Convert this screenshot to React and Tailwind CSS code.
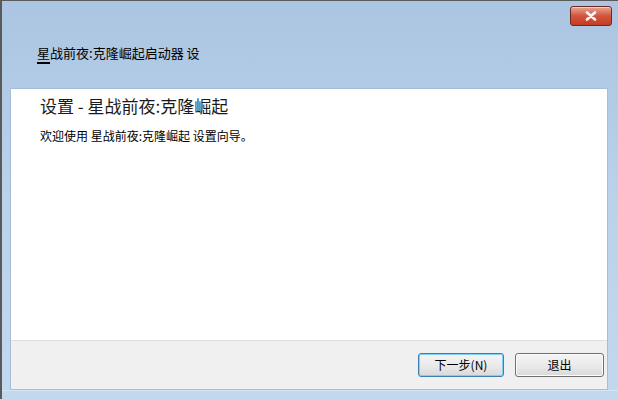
import React from 'react';

const font = { fontFamily: '"Noto Sans CJK SC", "Noto Sans", sans-serif' };

const CloseButton = () => (
  <button className="w-[42px] h-[20px] rounded-[3px] border border-[#6b2a20] bg-gradient-to-b from-[#e8a493] via-[#d1543c] to-[#c43c22] flex items-center justify-center shadow-[inset_0_1px_0_rgba(255,255,255,0.5)]">
    <svg width="12" height="10" viewBox="0 0 12 10">
      <path d="M2 1.5 L10 8.5 M10 1.5 L2 8.5" stroke="#ffffff" strokeWidth="2.6" strokeLinecap="round" />
      <path d="M2 1.5 L10 8.5 M10 1.5 L2 8.5" stroke="#f4f4f4" strokeWidth="1.4" strokeLinecap="round" />
    </svg>
  </button>
);

const WinButton = ({ children, focused }) => (
  <button
    className={`h-[24px] rounded-[3px] text-[12px] text-black flex items-center justify-center bg-gradient-to-b from-[#f4f4f4] via-[#ebebeb] to-[#d9d9d9] ${
      focused ? 'w-[86px] border border-[#3c7fb1] shadow-[inset_0_0_0_1px_#7fd0f6]' : 'w-[89px] border border-[#707070] shadow-[inset_0_0_0_1px_#fcfcfc]'
    }`}
  >
    {children}
  </button>
);

export default function App() {
  return (
    <div
      className="w-[618px] h-[399px] flex flex-col bg-gradient-to-b from-[#abc5e2] via-[#bad2ea] to-[#c2d8ee] border-l-2 border-t border-[#5a5a5a] overflow-hidden"
      style={font}
    >
      {/* Title bar */}
      <div className="h-[87px] flex flex-col">
        <div className="flex justify-end pt-[5px] pr-[6px]">
          <CloseButton />
        </div>
        <div className="pl-[35px] pt-[20px] text-[13px] text-black leading-none">
          <span className="underline underline-offset-[4px] decoration-2">星</span>战前夜:克隆崛起启动器 设
        </div>
      </div>

      {/* Client area */}
      <div className="flex-1 flex flex-col ml-[8px] mr-[10px] border border-[#a4bdd8] bg-white">
        <div className="flex-1 flex flex-col pl-[29px] pt-[8px]">
          <div className="text-[17px] text-[#1a1a1a] leading-none">设置 - 星战前夜:克隆崛起</div>
          <div className="text-[12px] text-black mt-[16px] leading-none">欢迎使用 星战前夜:克隆崛起 设置向导。</div>
        </div>
        <div className="h-[49px] bg-[#f0f0f0] border-t border-[#dfdfdf] flex items-center justify-end gap-[11px] pr-[3px]">
          <WinButton focused>下一步(N)</WinButton>
          <WinButton>退出</WinButton>
        </div>
      </div>

      {/* Bottom frame */}
      <div className="h-[9px] border-t border-[#d6e5f5]" />
    </div>
  );
}
